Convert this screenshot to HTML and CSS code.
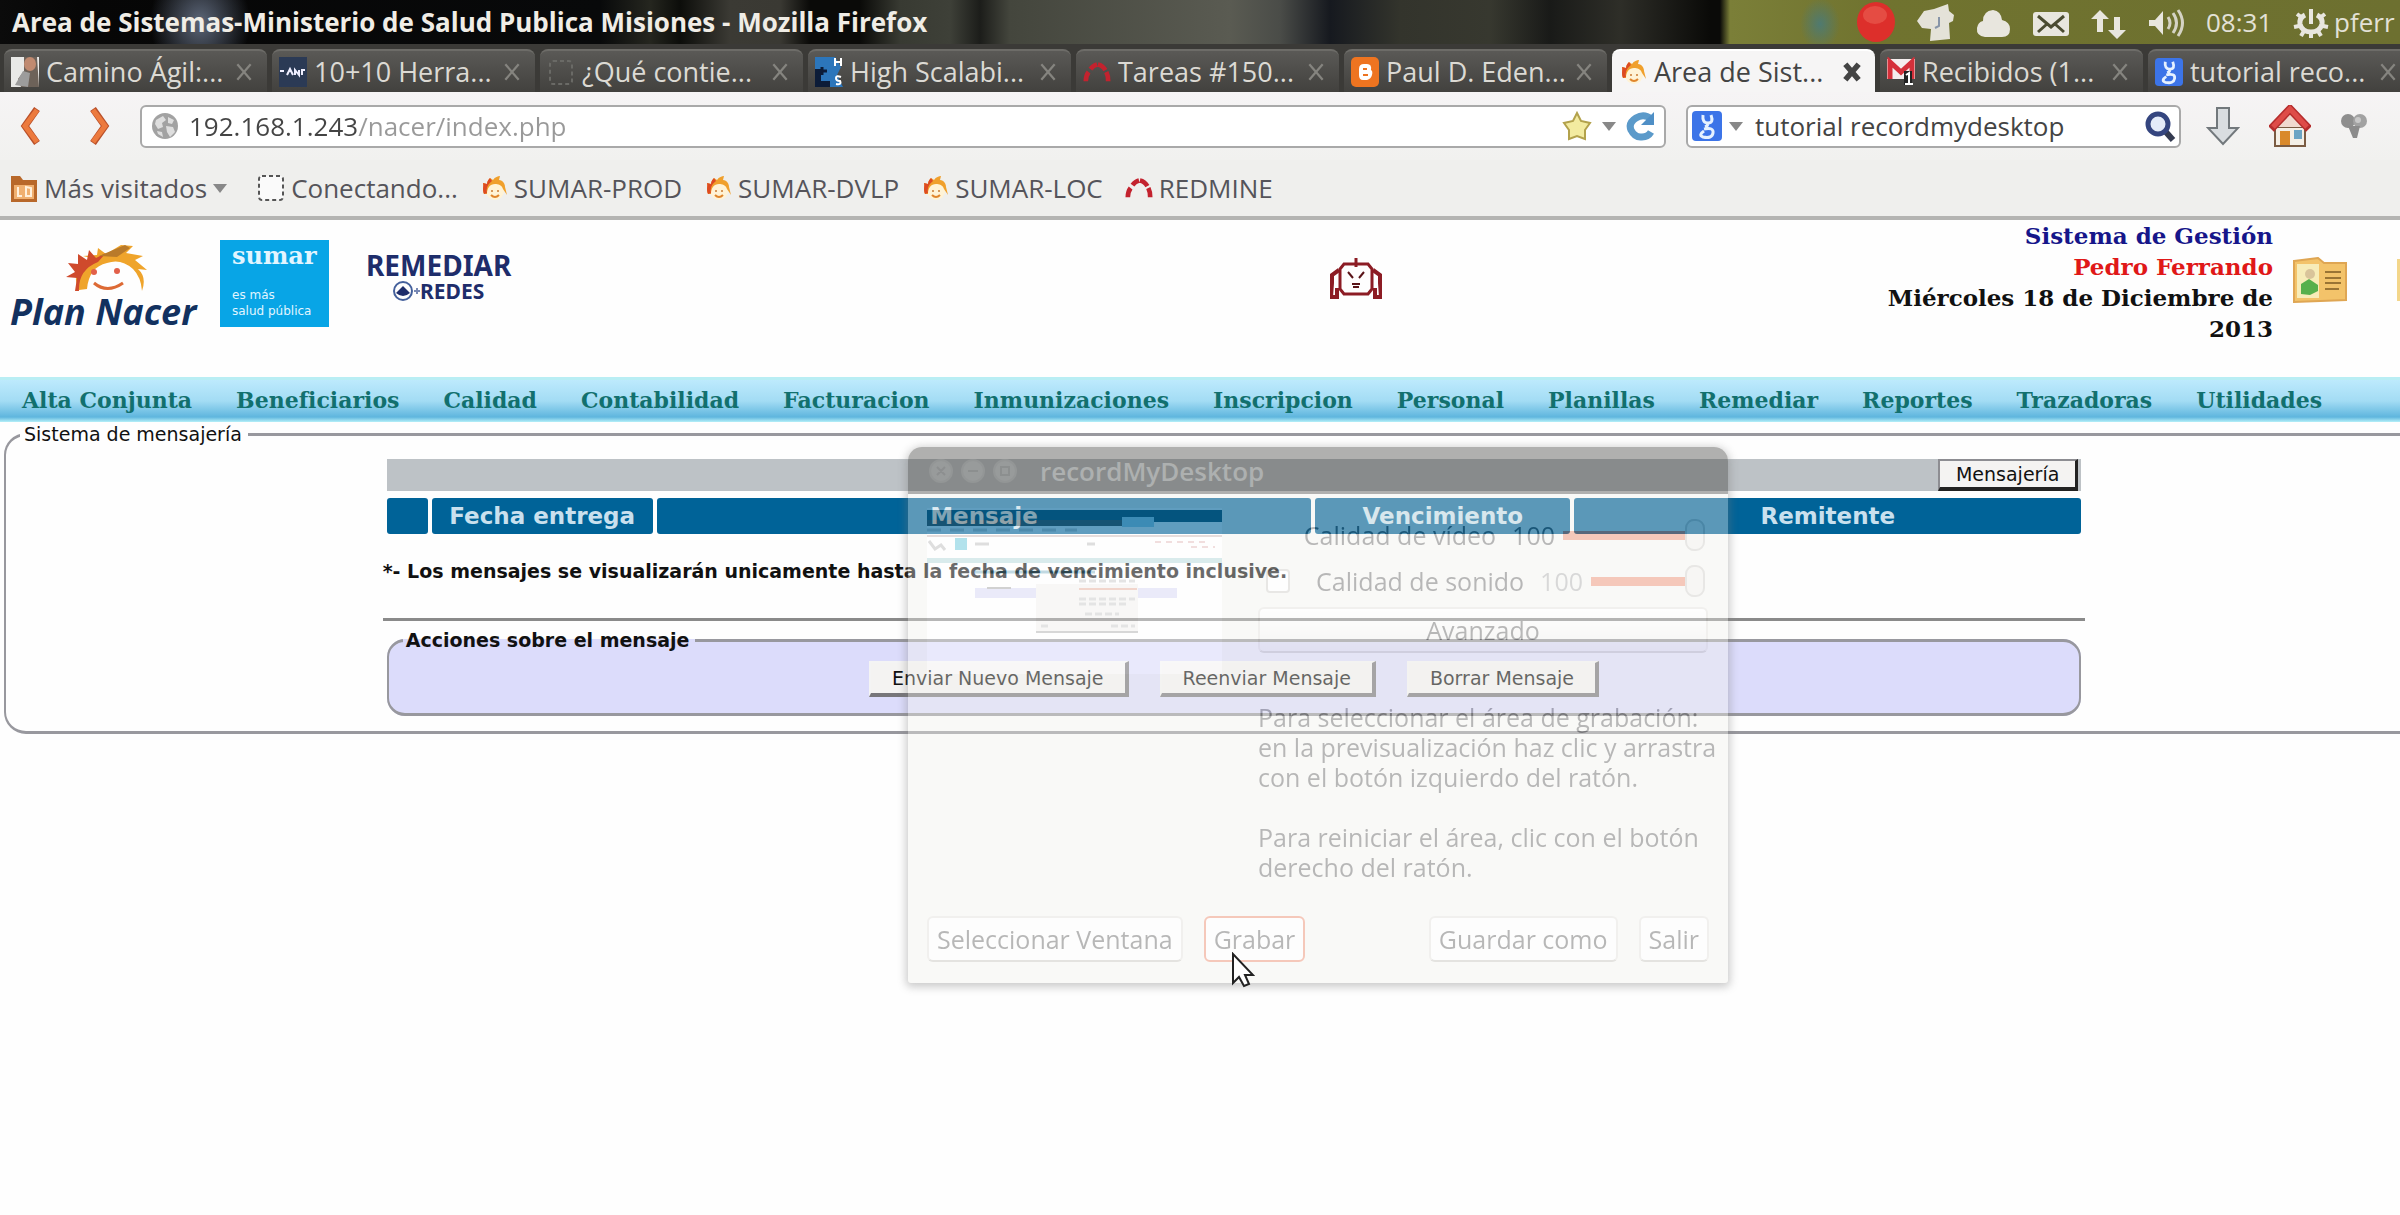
FILE: index.html
```html
<!DOCTYPE html>
<html lang="es">
<head>
<meta charset="utf-8">
<title>Area de Sistemas-Ministerio de Salud Publica Misiones</title>
<link rel="stylesheet" href="styles.css">
</head>
<body>
<svg class="sprites" aria-hidden="true">
  <symbol id="face" viewBox="0 0 28 28">
    <circle cx="15" cy="17" r="9" fill="#fff3d6"/>
    <path d="M4 20C2 15 4 12 3 9l4 1c0-3 2-5 3-6l3 2c2-3 5-4 7-4l-1 4c4 0 6 4 6 7l2 8-4-6c-1-4-5-5-8-5-5 0-8 4-8 10z" fill="#f0a02c"/>
    <path d="M4 20C2 15 4 12 3 9l4 1c0-3 2-5 3-6l2 3c-4 3-6 7-5 12z" fill="#dd4a22"/>
    <circle cx="12" cy="17" r="1" fill="#c87a30"/><circle cx="18" cy="17" r="1" fill="#c87a30"/>
    <path d="M11 21q4 4 8 0" fill="none" stroke="#e0862c" stroke-width="2"/>
  </symbol>
  <symbol id="close" viewBox="0 0 18 18">
    <path d="M3 2l12 14M15 2L3 16" fill="none" stroke="currentColor"/>
  </symbol>
  <symbol id="arches" viewBox="0 0 30 28">
    <path d="M3 24q0-6 3-10M8 11q3-4 7-5M16 6q5 1 8 6M25 14q2 4 2 10" fill="none" stroke="#c3222e" stroke-width="5"/>
  </symbol>
  <symbol id="google" viewBox="0 0 30 30">
    <rect width="30" height="30" rx="4" fill="#3c74e8"/>
    <path d="M11 4q-1 8 5 8t3-8M16 12q0 3-3 4M12 18q10-2 9 4t-10 4q-5-2 1-6" fill="none" stroke="#e6f1ff" stroke-width="3"/>
  </symbol>
  <symbol id="caret" viewBox="0 0 14 10"><path d="M0 1h14L7 10z" fill="#888"/></symbol>
</svg>

<header class="titlebar">
  <h1 class="window-title">Area de Sistemas-Ministerio de Salud Publica Misiones - Mozilla Firefox</h1>
  <div class="tray">
    <svg class="tray-record" viewBox="0 0 40 42"><ellipse cx="20" cy="21" rx="19" ry="20" fill="#dd2f2b"/><ellipse cx="19" cy="14" rx="12" ry="9" fill="#ee6a5c" opacity=".5"/></svg>
    <svg class="tray-icon" viewBox="0 0 38 38"><path d="M1 18L8 8l10-2 14-5 1 7 5 4-1 6-4 2 1 16-20 2 1-12-9-1z" fill="#e4e2d8"/><path d="M23 14v9l-4 2" fill="none" stroke="#8795a8" stroke-width="2"/></svg>
    <svg class="tray-icon" viewBox="0 0 38 38"><path d="M11 34q-9-1-8-9 1-6 6-7 0-10 10-11 8 1 9 10 8 2 8 9 0 8-8 8z" fill="#e8e6de"/></svg>
    <svg class="tray-icon" viewBox="0 0 38 38"><rect x="1" y="9" width="36" height="24" rx="3" fill="#e8e6de"/><path d="M6 13l13 11 13-11M6 29l9-8M32 29l-9-8" fill="none" stroke="#4a4b30" stroke-width="3"/></svg>
    <svg class="tray-icon" viewBox="0 0 38 38"><path d="M10 7l9 9h-6v13H7V16H1zM27 36l-9-9h6V14h6v13h6z" fill="#e8e6de"/></svg>
    <svg class="tray-icon" viewBox="0 0 38 38"><path d="M1 17h6l8-9v24l-8-9H1z" fill="#e8e6de"/><path d="M20 14q4 6 0 12M25 10q7 10 0 20M30 7q9 13 0 26" fill="none" stroke="#d5d3c4" stroke-width="3"/></svg>
    <span class="clock">08:31</span>
    <span class="session"><svg class="tray-icon" viewBox="0 0 38 38"><path d="M13 12q-6 3-5 9 2 8 11 8t11-8q1-6-5-9" fill="none" stroke="#e8e6de" stroke-width="5"/><path d="M19 6v15" stroke="#e8e6de" stroke-width="4"/><path d="M9 14l-4-3M29 14l4-3M7 23l-5 1M31 23l5 1M12 28l-3 5M26 28l3 5M19 30v5" stroke="#e8e6de" stroke-width="4"/></svg>pferr</span>
  </div>
</header>

<nav class="tabs" aria-label="Pestañas">
  <div class="tab"><svg class="favicon" viewBox="0 0 28 30"><rect width="28" height="30" fill="#e9e9e7"/><path d="M13 0h13l2 30H10L7 22l6-8z" fill="#6d6259"/><ellipse cx="19" cy="7" rx="6" ry="7" fill="#c08a70"/><path d="M4 28l8-14 7 2-2 14z" fill="#9c9c9c"/></svg><span class="tab-name">Camino Ágil:...</span><button class="tab-close" aria-label="Cerrar"><svg><use href="#close"/></svg></button></div>
  <div class="tab"><svg class="favicon" viewBox="0 0 28 30"><rect width="28" height="30" fill="#2b3a55"/><path d="M1 14h4M8 18l3-6 3 6M16 18v-5l4 5v-5M23 18v-5h3" fill="none" stroke="#eef" stroke-width="2"/></svg><span class="tab-name">10+10 Herra...</span><button class="tab-close" aria-label="Cerrar"><svg><use href="#close"/></svg></button></div>
  <div class="tab"><svg class="favicon" viewBox="0 0 28 30"><rect x="3" y="4" width="22" height="23" rx="3" fill="none" stroke="#6a6a66" stroke-width="2" stroke-dasharray="4 3"/></svg><span class="tab-name">¿Qué contie...</span><button class="tab-close" aria-label="Cerrar"><svg><use href="#close"/></svg></button></div>
  <div class="tab"><svg class="favicon" viewBox="0 0 28 30"><path d="M0 0h20l6 10-4 8 6 12H0z" fill="#2c76bb"/><path d="M0 12h6v12h9v6H0z" fill="#0c1c38"/><path d="M7 10v8M4 14h8" stroke="#0c1c38" stroke-width="3"/><path d="M20 1v8M26 1v8M20 5h6M26 20q-5-2-5 1t4 3q2 4-4 3" fill="none" stroke="#fff" stroke-width="2"/></svg><span class="tab-name">High Scalabi...</span><button class="tab-close" aria-label="Cerrar"><svg><use href="#close"/></svg></button></div>
  <div class="tab"><svg class="favicon"><use href="#arches"/></svg><span class="tab-name">Tareas #150...</span><button class="tab-close" aria-label="Cerrar"><svg><use href="#close"/></svg></button></div>
  <div class="tab"><svg class="favicon" viewBox="0 0 28 30"><rect width="28" height="30" rx="5" fill="#ee7420"/><path d="M8 12q0-5 5-5h3q5 0 4 6 2 1 1 5t-5 5h-4q-4 0-4-5z" fill="#fff"/><path d="M12 12h4M12 18h5" stroke="#ee7420" stroke-width="2"/></svg><span class="tab-name">Paul D. Eden...</span><button class="tab-close" aria-label="Cerrar"><svg><use href="#close"/></svg></button></div>
  <div class="tab tab-active"><svg class="favicon"><use href="#face"/></svg><span class="tab-name">Area de Sist...</span><button class="tab-close" aria-label="Cerrar"><svg><use href="#close"/></svg></button></div>
  <div class="tab"><svg class="favicon" viewBox="0 0 28 30"><rect y="2" width="28" height="20" fill="#f4eeee"/><path d="M3 22V5l11 10L25 5v17" fill="none" stroke="#d5303a" stroke-width="5"/><path d="M17 14h8v14h-8z" fill="#222"/><path d="M19 18l3-2v10M18 27h8" fill="none" stroke="#fff" stroke-width="2"/></svg><span class="tab-name">Recibidos (1...</span><button class="tab-close" aria-label="Cerrar"><svg><use href="#close"/></svg></button></div>
  <div class="tab"><svg class="favicon"><use href="#google"/></svg><span class="tab-name">tutorial reco...</span><button class="tab-close" aria-label="Cerrar"><svg><use href="#close"/></svg></button></div>
</nav>

<section class="toolbar">
  <div class="history">
    <button class="plain" aria-label="Atrás"><svg width="22" height="38" viewBox="0 0 22 38"><path d="M18 2L6 19l12 17" fill="none" stroke="#b9502a" stroke-width="7"/><path d="M18 3L6 19l12 16" fill="none" stroke="#ec7a3e" stroke-width="5"/></svg></button>
    <button class="plain" aria-label="Adelante"><svg width="22" height="38" viewBox="0 0 22 38"><path d="M4 2l12 17L4 36" fill="none" stroke="#b9502a" stroke-width="7"/><path d="M4 3l12 16L4 35" fill="none" stroke="#ec7a3e" stroke-width="5"/></svg></button>
  </div>
  <form class="field url-field">
    <svg width="27" height="27" viewBox="0 0 27 27"><circle cx="13" cy="13" r="13" fill="#a2a2a2"/><path d="M4 7l7-4 3 4-4 3 1 4-5 2-3-5zM16 4l6 3-2 4-4-1zM14 13l7 1 2 5-5 5-3-5zM5 18l5 1 1 5-5-3z" fill="#dedede"/></svg>
    <input class="field-input url-input" type="text" aria-label="Dirección" value="192.168.1.243/nacer/index.php">
    <svg width="30" height="30" viewBox="0 0 30 30"><path d="M15 2l4 8 9 2-5 7v9l-8-3-8 3v-9l-5-7 9-2z" fill="#f3eba0" stroke="#b3a24c" stroke-width="2"/></svg>
    <svg class="caret"><use href="#caret"/></svg>
    <button class="plain" type="button" aria-label="Recargar"><svg width="32" height="30" viewBox="0 0 32 30"><path d="M25 8Q18 2 10 7T5 19q4 8 11 7 6 0 9-5" fill="none" stroke="#5b9aca" stroke-width="7"/><path d="M28 1v13H15z" fill="#4f8fc6"/></svg></button>
  </form>
  <form class="field search-field">
    <svg width="30" height="30"><use href="#google"/></svg>
    <svg class="caret"><use href="#caret"/></svg>
    <input class="field-input" type="text" aria-label="Buscar" value="tutorial recordmydesktop">
    <button class="plain" type="button" aria-label="Buscar"><svg width="32" height="32" viewBox="0 0 32 32"><path d="M21 21l8 9" stroke="#333a50" stroke-width="6"/><circle cx="14" cy="14" r="10" fill="#e4ebf8" stroke="#34457f" stroke-width="5"/></svg></button>
  </form>
  <div class="tools">
    <button class="plain" aria-label="Descargas"><svg width="34" height="40" viewBox="0 0 34 40"><path d="M11 2h12v20h9L17 38 2 22h9z" fill="#d9dde0" stroke="#72787c" stroke-width="2"/></svg></button>
    <button class="plain" aria-label="Inicio"><svg width="42" height="42" viewBox="0 0 42 42"><path d="M6 22h30v19H6z" fill="#f4efe6" stroke="#7a5b42" stroke-width="2"/><path d="M6 22L21 5l15 17z" fill="#f0d9cf"/><path d="M2 24L21 4l19 20" fill="none" stroke="#b52d2d" stroke-width="8"/><path d="M4 22L21 4l17 18" fill="none" stroke="#de4c48" stroke-width="5"/><path d="M11 26h10v14H11z" fill="#d9892b"/><path d="M25 25h8v9h-8z" fill="#6ba4c4"/></svg></button>
    <button class="plain" aria-label="Complemento"><svg width="28" height="28" viewBox="0 0 28 28"><circle cx="8" cy="9" r="7" fill="#8e8e8e"/><circle cx="20" cy="9" r="7" fill="#a2a2a2"/><path d="M8 14h12l-3 12h-4z" fill="#8b8b8b"/><circle cx="18" cy="8" r="3" fill="#c8c8c8"/></svg></button>
  </div>
</section>

<nav class="bookmarks" aria-label="Marcadores">
  <a class="bookmark" href="#"><svg width="28" height="30" viewBox="0 0 28 30"><path d="M1 3h9l3 4h14v22H1z" fill="#b8682a"/><path d="M4 12h20v14H4z" fill="#f0b070"/><path d="M8 14v9h4M16 14v9h5v-8z" fill="none" stroke="#fff0dc" stroke-width="2"/></svg>Más visitados<svg class="caret"><use href="#caret"/></svg></a>
  <a class="bookmark" href="#"><svg width="28" height="30" viewBox="0 0 28 30"><rect x="2" y="3" width="24" height="24" rx="3" fill="#fafafa" stroke="#555" stroke-width="2" stroke-dasharray="4 3"/></svg>Conectando...</a>
  <a class="bookmark" href="#"><svg width="28" height="30"><use href="#face"/></svg>SUMAR-PROD</a>
  <a class="bookmark" href="#"><svg width="28" height="30"><use href="#face"/></svg>SUMAR-DVLP</a>
  <a class="bookmark" href="#"><svg width="28" height="30"><use href="#face"/></svg>SUMAR-LOC</a>
  <a class="bookmark" href="#"><svg width="28" height="30"><use href="#arches"/></svg>REDMINE</a>
</nav>

<div class="page">
  <header class="site-header">
    <div class="logos">
      <div class="logo-nacer">
        <svg class="nacer-face" width="90" height="48" viewBox="0 0 90 48"><path d="M14 46Q4 28 26 14l-8-2 14-1 1-7 8 6 15-9 12 1-7 7 17 3-8 4 12 10-9-1q9 8 4 22-1-14-9-22-12-11-26-6-18 4-20 26z" fill="#efa42b"/><path d="M10 47l2-13-11-1 9-5-7-9 10 1 0-10 9 6 2-10 7 8 10-5-8 9q-20 8-19 29z" fill="#cf4a2c"/><path d="M34 12L60 1l5 3-13 9z" fill="#b97a2a"/><circle cx="29" cy="28" r="3" fill="#e2604a"/><circle cx="52" cy="27" r="3" fill="#e2604a"/><path d="M29 39q13 11 29 0" fill="none" stroke="#dd6a35" stroke-width="3"/></svg>
        <strong class="nacer-name">Plan Nacer</strong>
      </div>
      <div class="logo-sumar"><strong class="sumar-name">sumar</strong><span class="sumar-motto">es más<br>salud pública</span></div>
      <div class="logo-remediar"><strong class="remediar-name">REMEDIAR</strong><span class="redes"><svg width="27" height="22" viewBox="0 0 27 22"><circle cx="10" cy="11" r="9" fill="none" stroke="#44609c" stroke-width="2"/><path d="M3 13l7-7 7 7q-7 6-14 0z" fill="#1e2d6b"/><path d="M21 11h6M24 8v6" stroke="#7788b4" stroke-width="2"/></svg>REDES</span></div>
    </div>
    <svg class="robot" width="52" height="42" viewBox="0 0 52 42"><path d="M26 1v9M14 7h24l4 5v20l-4 5H14l-4-5V12z" fill="none" stroke="#8c1c24" stroke-width="3"/><path d="M9 13l-7 5v8l-1 14h6v-9M43 13l7 5v8l1 14h-6v-9" fill="none" stroke="#8c1c24" stroke-width="4"/><path d="M18 15l5 6M34 15l-5 6M22 27h8M23 30h6" fill="none" stroke="#5a1418" stroke-width="2"/></svg>
    <div class="user-info">
      <span class="system-name">Sistema de Gestión</span>
      <span class="user-name">Pedro Ferrando</span>
      <span>Miércoles 18 de Diciembre de 2013</span>
    </div>
    <svg class="card" width="56" height="46" viewBox="0 0 56 46"><path d="M2 4l24-3 6 5h22v37l-52 2z" fill="#f3c36a" stroke="#dfa653" stroke-width="2"/><path d="M5 7h22v34H5z" fill="#f7ecb8"/><circle cx="18" cy="17" r="5" fill="#d9c49a"/><path d="M9 37V27l8-5 9 6v6l-8 4z" fill="#57b04c"/><path d="M33 15h16M33 21h16M33 26h16M33 32h14" stroke="#9a7434" stroke-width="2"/></svg>
    <svg class="card-next" width="56" height="46" viewBox="0 0 56 46"><rect x="1" y="2" width="54" height="42" fill="#f3d68a"/></svg>
  </header>

  <nav class="menu" aria-label="Menú principal">
    <a href="#">Alta Conjunta</a><a href="#">Beneficiarios</a><a href="#">Calidad</a><a href="#">Contabilidad</a><a href="#">Facturacion</a><a href="#">Inmunizaciones</a><a href="#">Inscripcion</a><a href="#">Personal</a><a href="#">Planillas</a><a href="#">Remediar</a><a href="#">Reportes</a><a href="#">Trazadoras</a><a href="#">Utilidades</a>
  </nav>

  <fieldset class="messaging">
    <legend>Sistema de mensajería</legend>
    <div class="messages">
      <div class="strip"><button class="classic classic-dark">Mensajería</button></div>
      <table class="grid">
        <colgroup><col class="col-mark"><col class="col-date"><col><col class="col-due"><col class="col-sender"></colgroup>
        <thead><tr><th></th><th>Fecha entrega</th><th>Mensaje</th><th>Vencimiento</th><th>Remitente</th></tr></thead>
      </table>
      <p class="note">*- Los mensajes se visualizarán unicamente hasta la fecha de vencimiento inclusive.</p>
      <hr class="rule">
      <fieldset class="actions">
        <legend>Acciones sobre el mensaje</legend>
        <div class="action-row">
          <button class="classic">Enviar Nuevo Mensaje</button>
          <button class="classic">Reenviar Mensaje</button>
          <button class="classic">Borrar Mensaje</button>
        </div>
      </fieldset>
    </div>
  </fieldset>
</div>

<section class="recorder" aria-label="recordMyDesktop">
  <header class="recorder-title">
    <svg width="92" height="28" viewBox="0 0 92 28"><g fill="#5b5a55" stroke="#4e4d49" stroke-width="2"><circle cx="14" cy="14" r="11"/><circle cx="46" cy="14" r="11"/><circle cx="78" cy="14" r="11"/></g><path d="M10 10l8 8M18 10l-8 8M41 14h10M74 10h8v8h-8z" fill="none" stroke="#3c3b37" stroke-width="2"/></svg>
    <h2>recordMyDesktop</h2>
  </header>
  <div class="recorder-body">
    <svg class="preview" viewBox="0 0 295 166" preserveAspectRatio="none">
      <rect width="295" height="166" fill="#fff"/>
      <rect y="2" width="295" height="12" fill="#0b3f52"/><rect y="12" width="195" height="6" fill="#3c3b37"/><rect x="195" y="9" width="32" height="10" fill="#9fd0e4"/>
      <path d="M0 22h150" stroke="#ccc" stroke-width="3" stroke-dasharray="14 9"/>
      <path d="M0 28h295" stroke="#c0a8a4" stroke-width="2"/>
      <rect x="28" y="30" width="12" height="12" fill="#35b4cf"/><path d="M48 36h14M160 36h8M2 33l6 8 6-4 4 5" fill="none" stroke="#aaa" stroke-width="3"/>
      <path d="M228 34h50M264 39h24" stroke="#daa" stroke-width="2" stroke-dasharray="6 5"/>
      <rect y="50" width="295" height="5" fill="#9ccdd0"/><path d="M48 64h120" stroke="#5d9db4" stroke-width="3"/>
      <rect x="48" y="80" width="202" height="10" fill="#c9c9f2"/><path d="M60 80h24" stroke="#888" stroke-width="2"/>
      <rect x="109" y="76" width="102" height="48" fill="#eeede9"/><path d="M109 124h102" stroke="#999" stroke-width="2"/>
      <path d="M152 81h58" stroke="#dc927a" stroke-width="2"/><path d="M152 73h56M152 91h56M152 96h48M158 106h34M114 118h10M184 118h24" stroke="#bbb" stroke-width="3" stroke-dasharray="7 3"/>
    </svg>
    <div class="settings">
      <div class="setting"><label for="video">Calidad de vídeo</label><output>100</output><input class="slider slider-wide" id="video" type="range" value="100"></div>
      <div class="setting"><input class="sound-check" id="sound-on" type="checkbox"><label for="sound-on">Calidad de sonido</label><output class="dim">100</output><input class="slider" aria-label="Calidad de sonido" type="range" value="100"></div>
      <button class="gtk advanced">Avanzado</button>
      <p class="help">Para seleccionar el área de grabación:<br>en la previsualización haz clic y arrastra<br>con el botón izquierdo del ratón.<br><br>Para reiniciar el área, clic con el botón<br>derecho del ratón.</p>
    </div>
  </div>
  <footer class="recorder-buttons">
    <button class="gtk">Seleccionar Ventana</button>
    <button class="gtk gtk-focus">Grabar</button>
    <button class="gtk push">Guardar como</button>
    <button class="gtk">Salir</button>
  </footer>
</section>
<svg class="pointer" width="24" height="36" viewBox="0 0 24 36"><path d="M2 2v29l6-6 5 9 5-2-4-9h8z" fill="#fff" stroke="#222" stroke-width="2"/></svg>
</body>
</html>
```
FILE: styles.css
```css
* { box-sizing: border-box; }

html { background: #fefefe; }

body {
  position: relative;
  min-height: 100vh;
  margin: 0;
  overflow: hidden;
  font: 19px/24px "DejaVu Sans", sans-serif;
  color: #111;
}

button, input { font: inherit; color: inherit; }
h1, h2, p { margin: 0; }
a { text-decoration: none; }
svg { flex: none; }

.sprites { display: none; }

.plain {
  display: flex;
  flex: none;
  padding: 0;
  border: 0;
  background: none;
}

/* Desktop panel */
.titlebar {
  display: flex;
  justify-content: space-between;
  align-items: center;
  height: 44px;
  padding-left: 12px;
  overflow: hidden;
  white-space: nowrap;
  font-family: "Open Sans", sans-serif;
  background:
    radial-gradient(ellipse 50px 60px at 200px 22px, #5c6678, transparent),
    radial-gradient(ellipse 20px 26px at 1820px 24px, #4f7a70, transparent),
    linear-gradient(90deg, transparent 1720px, #7b7f38 1730px, #70732f 1880px, #6d7030),
    linear-gradient(90deg, #0b0b0b 0, #060606 80px, #08090a 600px, #25261f 650px, #0c0d0a 680px, #3b3a34 730px, #3a3933 780px, #0a0a08 810px, #0a0a08 860px, #383a32 900px, #3e4038 950px, #1c1d1a 980px, #44463d 1010px, #5a5b52 1230px, #4a4c48 1280px, #16191f 1330px, #33342c 1400px, #37382f 1490px, #191a18 1550px, #2e2e28 1620px, #0a0a08 1710px);
}

.window-title {
  font-size: 26px;
  line-height: 32px;
  font-weight: 700;
  color: #f0ede6;
}

.tray {
  display: flex;
  align-items: center;
  gap: 20px;
  flex: none;
  width: 544px;
  color: #e3e1d6;
  font-size: 26px;
}

.tray-record { width: 40px; height: 42px; }
.tray-icon { width: 38px; height: 38px; }
.clock { width: 66px; }
.session { display: flex; align-items: center; gap: 4px; }

/* Browser tabs */
.tabs {
  display: flex;
  gap: 5px;
  height: 48px;
  padding: 5px 4px 0;
  overflow: hidden;
  background: #3b3a37;
}

.tab {
  display: flex;
  align-items: center;
  flex: none;
  width: 263px;
  padding: 0 13px 0 7px;
  border-top: 2px solid #6d6c68;
  border-radius: 8px 8px 0 0;
  background: linear-gradient(#5a5956, #42413e);
  color: #dcdad4;
  font: 27px/40px "Open Sans", sans-serif;
  white-space: nowrap;
}

.favicon { width: 28px; height: 30px; }
.tab-name { flex: 1; margin-left: 7px; }

.tab-close {
  flex: none;
  width: 20px;
  height: 20px;
  padding: 0;
  border: 0;
  background: none;
  color: #85847f;
  stroke-width: 2px;
}

.tab-close svg { display: block; width: 20px; height: 20px; }

.tab-active {
  border-color: #fff;
  background: #f6f5f5;
  color: #444;
}

.tab-active .tab-close { color: #444; stroke-width: 5px; }

/* Navigation toolbar */
.toolbar {
  display: flex;
  align-items: center;
  gap: 20px;
  height: 68px;
  padding: 0 32px 0 19px;
  background: linear-gradient(#f6f4f5, #f1f1ef);
  font: 26px/32px "Open Sans", sans-serif;
  color: #444;
}

.history { display: flex; gap: 48px; width: 101px; }

.tools {
  display: flex;
  align-items: center;
  gap: 29px;
  margin-left: 5px;
}

.field {
  display: flex;
  align-items: center;
  height: 43px;
  border: 2px solid #a9a9a9;
  border-radius: 6px;
  background: #fff;
}

.url-field { flex: 1; gap: 10px; padding: 0 6px 0 10px; }
.search-field { flex: none; width: 495px; gap: 7px; padding: 0 3px 0 4px; }

.field-input {
  flex: 1;
  min-width: 0;
  height: 36px;
  padding: 0;
  border: 0;
  background: none;
}

.search-field .field-input { padding-left: 5px; }

/* The host stands out from the rest of the address */
.url-input {
  background: linear-gradient(90deg, #444 169px, #999 169px);
  -webkit-background-clip: text;
  background-clip: text;
  -webkit-text-fill-color: transparent;
}

.caret { width: 14px; height: 10px; }

/* Bookmarks */
.bookmarks {
  display: flex;
  align-items: center;
  gap: 22px;
  height: 60px;
  padding: 0 10px;
  border-bottom: 4px solid #b4b4b2;
  background: #efefed;
  font: 26px/32px "Open Sans", sans-serif;
}

.bookmark {
  display: flex;
  align-items: center;
  gap: 6px;
  color: #55545a;
}

.bookmark:first-child { margin-right: 8px; }

/* Web page: wider than the window, cut at its right edge */
.page { margin-right: -64px; }

.site-header {
  display: flex;
  height: 157px;
  padding-left: 10px;
}

.logos { display: flex; width: 1320px; }

.logo-nacer {
  display: flex;
  flex-direction: column;
  align-items: flex-start;
  width: 210px;
  padding-top: 24px;
}

.nacer-face { margin-left: 55px; }

.nacer-name {
  font: italic bold 36px/40px "Open Sans", sans-serif;
  color: #12315f;
  white-space: nowrap;
}

.logo-sumar {
  display: flex;
  flex-direction: column;
  justify-content: space-between;
  width: 109px;
  height: 87px;
  margin-top: 20px;
  padding: 0 0 8px 12px;
  background: #08a5e6;
  color: #e2f5ff;
}

.sumar-name { font: bold 24px/32px "DejaVu Serif", serif; }
.sumar-motto { font: 12px/16px "DejaVu Sans", sans-serif; white-space: nowrap; }

.logo-remediar {
  display: flex;
  flex-direction: column;
  align-items: center;
  margin: 30px 0 0 37px;
  color: #1e2d6b;
}

.remediar-name { font: bold 28px/30px "Noto Sans", sans-serif; }

.redes {
  display: flex;
  align-items: center;
  font: bold 21px/22px "Noto Sans", sans-serif;
}

.robot { margin-top: 37px; }

.user-info {
  display: flex;
  flex-direction: column;
  width: 420px;
  margin-left: auto;
  text-align: right;
  font: bold 23px/31px "DejaVu Serif", serif;
}

.system-name { color: #16168a; }
.user-name { color: #e01818; }

.card { margin: 37px 48px 0 19px; }
.card-next { margin: 37px 12px 0 0; }

.menu {
  display: flex;
  gap: 44px;
  height: 45px;
  padding: 0 22px;
  border-top: 3px solid #b9eef4;
  background: linear-gradient(#bdeafd, #a3dcf4 50%, #5fb6de 88%, #b5f0f8);
  font: bold 22px/40px "DejaVu Serif", serif;
  white-space: nowrap;
}

.menu a { color: #12706e; }

.messaging, .actions {
  margin: 0;
  border: 3px solid #98989e;
  border-left-width: 2px;
  border-right-width: 2px;
}

.messaging {
  margin-left: 4px;
  padding: 13px 0 15px;
  border-radius: 22px;
}

.messaging > legend { margin-left: 14px; padding: 0 6px 0 4px; }

.messages { width: 69%; margin: 0 auto; }

.strip {
  display: flex;
  justify-content: flex-end;
  height: 32px;
  padding-right: 3px;
  margin-bottom: 7px;
  background: #bdc2c6;
}

.classic {
  height: 36px;
  padding: 0 21px;
  border: 2px solid #f4f4f4;
  border-right: 4px solid #77767a;
  border-bottom: 4px solid #77767a;
  background: #f4f3f2;
  white-space: nowrap;
}

.classic-dark {
  height: 32px;
  padding: 0 16px;
  border: 2px solid #8d8d92;
  border-right: 3px solid #222;
  border-bottom: 4px solid #222;
}

.grid {
  width: calc(100% + 8px);
  margin: 0 -4px;
  border-spacing: 4px 0;
  table-layout: fixed;
}

.grid th {
  height: 36px;
  padding: 0;
  border-radius: 3px;
  background: #006398;
  color: #c9e0ee;
  font-size: 23px;
  line-height: 24px;
}

.col-mark { width: 41px; }
.col-date { width: 221px; }
.col-due { width: 255px; }
.col-sender { width: 507px; }

.note { margin: 25px -4px 35px; font-weight: bold; }

.rule {
  height: 3px;
  margin: 0 -4px 7px;
  border: 0;
  background: #8a8a8a;
}

.actions {
  padding: 9px 0 16px;
  border-radius: 18px;
  background: #dcdcfb;
}

.actions > legend { margin-left: 14px; padding: 0 6px 0 3px; font-weight: bold; }

.action-row { display: flex; justify-content: center; gap: 31px; }

/* Recorder window, fading out over the page */
.recorder {
  position: absolute;
  left: 908px;
  top: 447px;
  width: 820px;
  border-radius: 14px 14px 3px 3px;
  background: #f2f1ec;
  box-shadow: 0 2px 8px 2px #777;
  opacity: .38;
  font: 25px/30px "Open Sans", sans-serif;
  color: #444;
}

.recorder-title {
  display: flex;
  align-items: center;
  gap: 21px;
  height: 47px;
  padding-left: 19px;
  border-radius: 14px 14px 0 0;
  background: #32322f;
  color: #93928c;
}

.recorder-title h2 { font-size: 26px; line-height: 32px; font-weight: 600; }

.recorder-body {
  display: grid;
  grid-template-columns: 295px 450px;
  gap: 36px;
  padding: 14px 19px 0;
}

.preview { width: 295px; height: 166px; }

.settings { padding-top: 4px; }

.setting {
  display: flex;
  align-items: center;
  justify-content: flex-end;
  height: 46px;
  padding-right: 3px;
}

.setting output { margin: 0 8px 0 16px; }
.dim { color: #9b9b9b; }

.sound-check {
  appearance: none;
  width: 24px;
  height: 24px;
  margin: 0 auto 0 8px;
  border: 2px solid #c4c2bc;
  border-radius: 4px;
  background: #fff;
}

.slider {
  appearance: none;
  width: 114px;
  height: 36px;
  margin: 0;
  background: linear-gradient(#e8704c, #e8704c) center / 100% 9px no-repeat;
}

.slider-wide { width: 142px; }

.slider::-webkit-slider-thumb {
  appearance: none;
  width: 20px;
  height: 32px;
  border: 2px solid #c4c2bc;
  border-radius: 9px;
  background: #eceae5;
}

.gtk {
  height: 46px;
  padding: 0 8px;
  border: 2px solid #dcdad4;
  border-bottom-color: #b9b7b0;
  border-radius: 6px;
  background: #fcfcfb;
  white-space: nowrap;
}

.advanced { display: block; width: 100%; margin: 3px 0 49px; background: linear-gradient(#fff, #e8e7e2); }

.help { white-space: nowrap; }

.recorder-buttons {
  display: flex;
  gap: 21px;
  padding: 34px 19px 21px;
}

.gtk-focus { border-color: #e8704c; }
.push { margin-left: auto; }

.pointer { position: absolute; left: 1231px; top: 952px; }
```
